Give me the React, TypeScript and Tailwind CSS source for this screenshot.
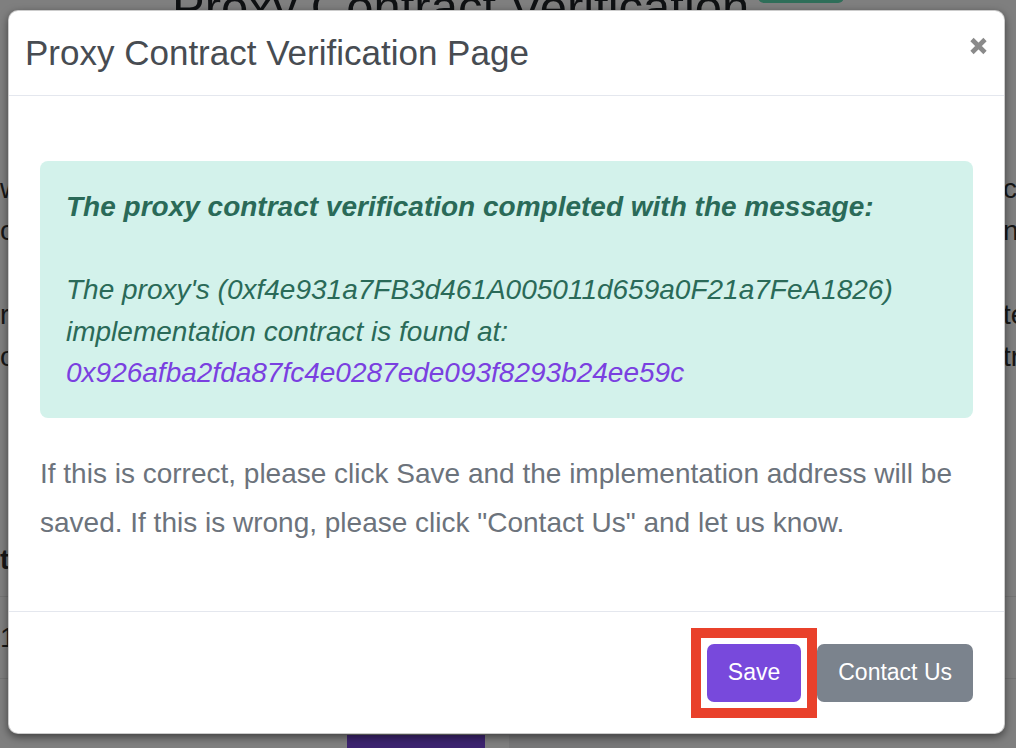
import React from "react";

function CloseIcon() {
  return (
    <svg width="19" height="18" viewBox="0 0 19 18" fill="none">
      <path d="M3 2.5 L16 15.5 M16 2.5 L3 15.5" stroke="#8a8a8a" strokeWidth="4.6" strokeLinecap="butt" />
    </svg>
  );
}

function BgRow({ left, right, h }: { left: string; right: string; h: string }) {
  return (
    <div className={`flex whitespace-nowrap items-center ${h}`}>
      <span className="w-[1003px] shrink-0">{left}</span>
      <span>{right}</span>
    </div>
  );
}

export default function App() {
  return (
    <div className="relative h-[748px] w-[1016px] overflow-hidden bg-white font-['Liberation_Sans',Arial,sans-serif]">
      {/* page behind the dialog */}
      <div className="flex flex-col text-[28px] text-[#2f2f2f]">
        <div className="flex h-[40px] items-start gap-[9px] pl-[172px]">
          <span className="-mt-[17px] text-[49px] leading-none text-[#1f2226]">Proxy Contract Verification</span>
          <span className="-mt-[31px] h-[34px] w-[86px] rounded-[6px] bg-[#5ddcb2]" />
        </div>
        <div className="mt-[128px] flex flex-col leading-[42px]">
          <BgRow left="we" right="copy" h="h-[42px]" />
          <BgRow left="co" right="n." h="h-[42px]" />
          <BgRow left="" right="" h="h-[42px]" />
          <BgRow left="r:" right="te" h="h-[42px]" />
          <BgRow left="or" right="tr" h="h-[42px]" />
        </div>
        <div className="mt-[167px] flex h-[30px] items-center whitespace-nowrap font-bold">te</div>
        <div className="mt-[21px] flex h-[83px] items-center border-y border-[#e8e8e8] whitespace-nowrap">1</div>
        <div className="mt-[56px] flex gap-[24px] pl-[347px]">
          <div className="h-[60px] w-[138px] bg-[#7a48e0] pt-[7px] text-center text-white">Verify</div>
          <div className="h-[60px] w-[141px] bg-[#eeeff1] pt-[7px] text-center text-[#333]">Reset</div>
        </div>
      </div>

      {/* backdrop */}
      <div className="absolute inset-0 bg-black/50" />

      {/* dialog */}
      <div className="absolute left-[8px] top-[10px] flex h-[724px] w-[997px] flex-col rounded-[10px] border border-black/20 bg-white shadow-[0_3px_9px_rgba(0,0,0,0.5)]">
        <div className="flex h-[85px] shrink-0 items-center justify-between border-b border-[#e4e7ee] pl-[16px] pr-[16px]">
          <h5 className="text-[35px] leading-[40px] text-[#474c52]">Proxy Contract Verification Page</h5>
          <button className="mb-auto mt-[26px] flex h-[18px] w-[19px] items-center justify-center">
            <CloseIcon />
          </button>
        </div>

        <div className="h-[515px] shrink-0 px-[31px] pt-[65px]">
          <div className="rounded-[8px] bg-[#d3f2eb] pb-[24px] pl-[26px] pr-[20px] pt-[25px] text-[28px] italic leading-[41.5px] text-[#2a6a58]">
            <p className="font-bold">The proxy contract verification completed with the message:</p>
            <p className="mt-[41.5px]">
              The proxy's (0xf4e931a7FB3d461A005011d659a0F21a7FeA1826)
              <br />
              implementation contract is found at:
              <br />
              <a className="text-[#7a40e0]">0x926afba2fda87fc4e0287ede093f8293b24ee59c</a>
            </p>
          </div>
          <p className="mt-[31px] text-[28px] leading-[49px] text-[#6c737c]">
            If this is correct, please click Save and the implementation address will be saved. If this is wrong, please click "Contact Us" and let us know.
          </p>
        </div>

        <div className="flex flex-1 items-center justify-end gap-4 border-t border-[#e4e7ee] pr-[31px]">
          <div className="relative">
            <button className="h-[58px] rounded-[7px] bg-[#7849dc] px-[21px] text-[23px] text-white">Save</button>
            <span className="pointer-events-none absolute -inset-[16px] border-[10px] border-[#e9412b]" />
          </div>
          <button className="h-[58px] rounded-[7px] bg-[#7b838d] px-[21px] text-[23px] text-white">Contact Us</button>
        </div>
      </div>
    </div>
  );
}
